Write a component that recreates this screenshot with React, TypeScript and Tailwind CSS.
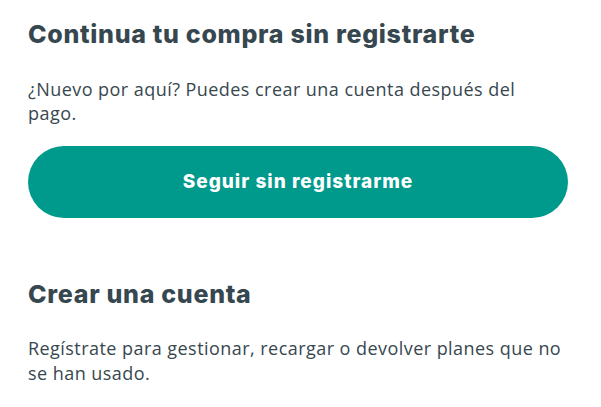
export default function App() {
  return (
    <div className="flex h-[407px] w-full bg-white">
      <div className="flex-1 px-7 pt-[18px]">
        <h2 className="font-['Inter',sans-serif] text-[25px] font-extrabold leading-8 tracking-[0.7px] text-[#37474f]">
          Continua tu compra sin registrarte
        </h2>
        <p className="mt-[27px] w-[520px] font-['Open_Sans',sans-serif] text-[18px] leading-[24px] tracking-[0.45px] text-[#37474f]">
          ¿Nuevo por aquí? Puedes crear una cuenta después del pago.
        </p>
        <button className="mt-[21px] flex h-[72px] w-[540px] items-center justify-center rounded-full bg-[#009a8c] font-['Inter',sans-serif] text-[19px] font-extrabold tracking-[1px] text-white">
          Seguir sin registrarme
        </button>
        <h2 className="mt-[60px] font-['Inter',sans-serif] text-[25px] font-extrabold leading-8 tracking-[0.7px] text-[#37474f]">
          Crear una cuenta
        </h2>
        <p className="mt-[26px] w-[545px] font-['Open_Sans',sans-serif] text-[18px] leading-[25px] tracking-[0.45px] text-[#37474f]">
          Regístrate para gestionar, recargar o devolver planes que no se han usado.
        </p>
      </div>
      <div className="w-[4px] bg-[#e8e8e8]" />
    </div>
  )
}
